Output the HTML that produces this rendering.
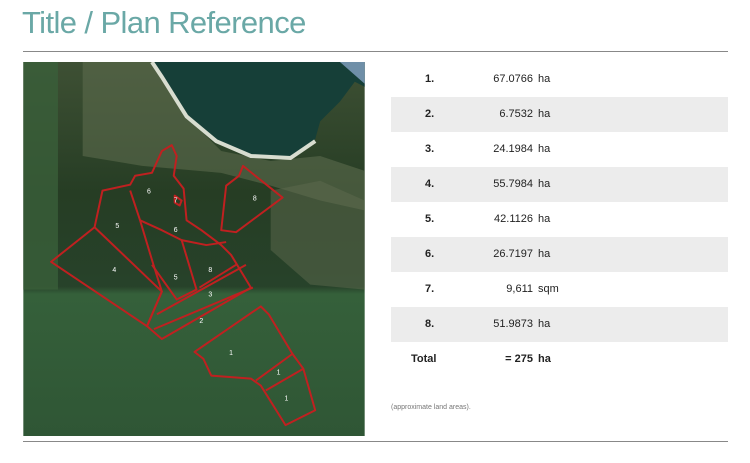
<!DOCTYPE html>
<html><head><meta charset="utf-8"><style>
body{margin:0;width:750px;height:463px;background:#fff;position:relative;overflow:hidden;font-family:"Liberation Sans",sans-serif;color:#222}
.t{position:absolute;left:22px;top:5px;font-size:31px;color:#6aa8a6;font-weight:300;letter-spacing:-0.6px}
.hl{position:absolute;left:23px;width:705px;height:1px;background:#888}
.row{position:absolute;left:391px;width:337px;height:35px;font-size:11px;line-height:35px}
.g{background:#ececec}
.l{position:absolute;left:34px;font-weight:bold}
.v{position:absolute;right:195px;text-align:right}
.u{position:absolute;left:147px}
</style></head><body>
<div class="t">Title / Plan Reference</div>
<div class="hl" style="top:51px"></div>
<svg style="position:absolute;left:23px;top:62px" width="342" height="374" viewBox="0 0 345 378">
<defs><linearGradient id="f" x1="0" y1="0" x2="0" y2="1"><stop offset="0" stop-color="#3e5034"/><stop offset="0.35" stop-color="#263d24"/><stop offset="0.6" stop-color="#27422a"/><stop offset="0.62" stop-color="#35603a"/><stop offset="1" stop-color="#2f5635"/></linearGradient></defs>
<rect width="345" height="378" fill="url(#f)"/>
<rect width="35" height="230" fill="#3a5f3a" opacity="0.8"/>
<path d="M60,0 L140,0 L170,60 L200,90 L250,100 L300,95 L345,110 L345,150 L300,140 L250,125 L200,112 L120,105 L60,95 Z" fill="#5c6a4c" opacity="0.6"/>
<path d="M250,130 L300,120 L345,140 L345,230 L290,225 L250,190 Z" fill="#5e6a4e" opacity="0.5"/>
<path d="M130,0 L345,0 L345,25 L335,20 L320,40 L300,60 L295,78 L270,97 L230,95 L195,80 L165,55 L140,15 Z" fill="#163f38"/>
<path d="M130,0 L140,15 L165,55 L195,80 L230,95 L270,97 L295,80" fill="none" stroke="#d8ddd0" stroke-width="4"/>
<path d="M320,0 L345,0 L345,22 Z" fill="#6f8fa8"/>
<g fill="none" stroke="#c02020" stroke-width="2" stroke-linejoin="round">
<path d="M28,202 L72,167 L140,232 L125,267 Z"/>
<path d="M72,167 L80,130 L108,124 L113,115 L130,112 L140,90 L150,84 L155,95 L152,115 L162,128 L165,160 L180,170 L200,185 L210,195 L230,228 L140,280 L125,267 L140,232 L130,200 L118,160 L108,130"/>
<path d="M118,160 L140,170 L160,180 L175,230 L155,240 L130,205"/>
<path d="M160,180 L185,185 L205,182 M178,228 L215,205 M135,255 L225,205 M132,270 L232,228"/>
<path d="M153,135 L160,140 L158,145 L153,142 Z"/>
<path d="M200,170 L205,125 L218,115 L222,105 L262,137 L215,172 Z"/>
<path d="M173,293 L240,247 L248,255 L272,295 L283,310 L295,352 L265,367 L240,327 L230,320 L190,317 L182,300 Z M235,322 L272,295 M245,332 L283,310"/>
</g>
<g fill="#fff" font-size="7" font-family="Liberation Sans">
<text x="93" y="168">5</text><text x="90" y="212">4</text><text x="125" y="133">6</text><text x="152" y="142">7</text><text x="152" y="172">6</text><text x="152" y="220">5</text><text x="187" y="212">8</text><text x="187" y="237">3</text><text x="178" y="264">2</text><text x="208" y="296">1</text><text x="256" y="316">1</text><text x="264" y="342">1</text><text x="232" y="140">8</text>
</g>
</svg>
<div class="row" style="top:62px"><span class="l">1.</span><span class="v">67.0766</span><span class="u">ha</span></div>
<div class="row g" style="top:97px"><span class="l">2.</span><span class="v">6.7532</span><span class="u">ha</span></div>
<div class="row" style="top:132px"><span class="l">3.</span><span class="v">24.1984</span><span class="u">ha</span></div>
<div class="row g" style="top:167px"><span class="l">4.</span><span class="v">55.7984</span><span class="u">ha</span></div>
<div class="row" style="top:202px"><span class="l">5.</span><span class="v">42.1126</span><span class="u">ha</span></div>
<div class="row g" style="top:237px"><span class="l">6.</span><span class="v">26.7197</span><span class="u">ha</span></div>
<div class="row" style="top:272px"><span class="l">7.</span><span class="v">9,611</span><span class="u">sqm</span></div>
<div class="row g" style="top:307px"><span class="l">8.</span><span class="v">51.9873</span><span class="u">ha</span></div>
<div class="row" style="top:342px;font-weight:bold"><span class="l" style="left:20px">Total</span><span class="v">= 275</span><span class="u">ha</span></div>
<div style="position:absolute;left:391px;top:404px;font-size:7px;color:#777">(approximate land areas).</div>
<div class="hl" style="top:441px"></div>
</body></html>
